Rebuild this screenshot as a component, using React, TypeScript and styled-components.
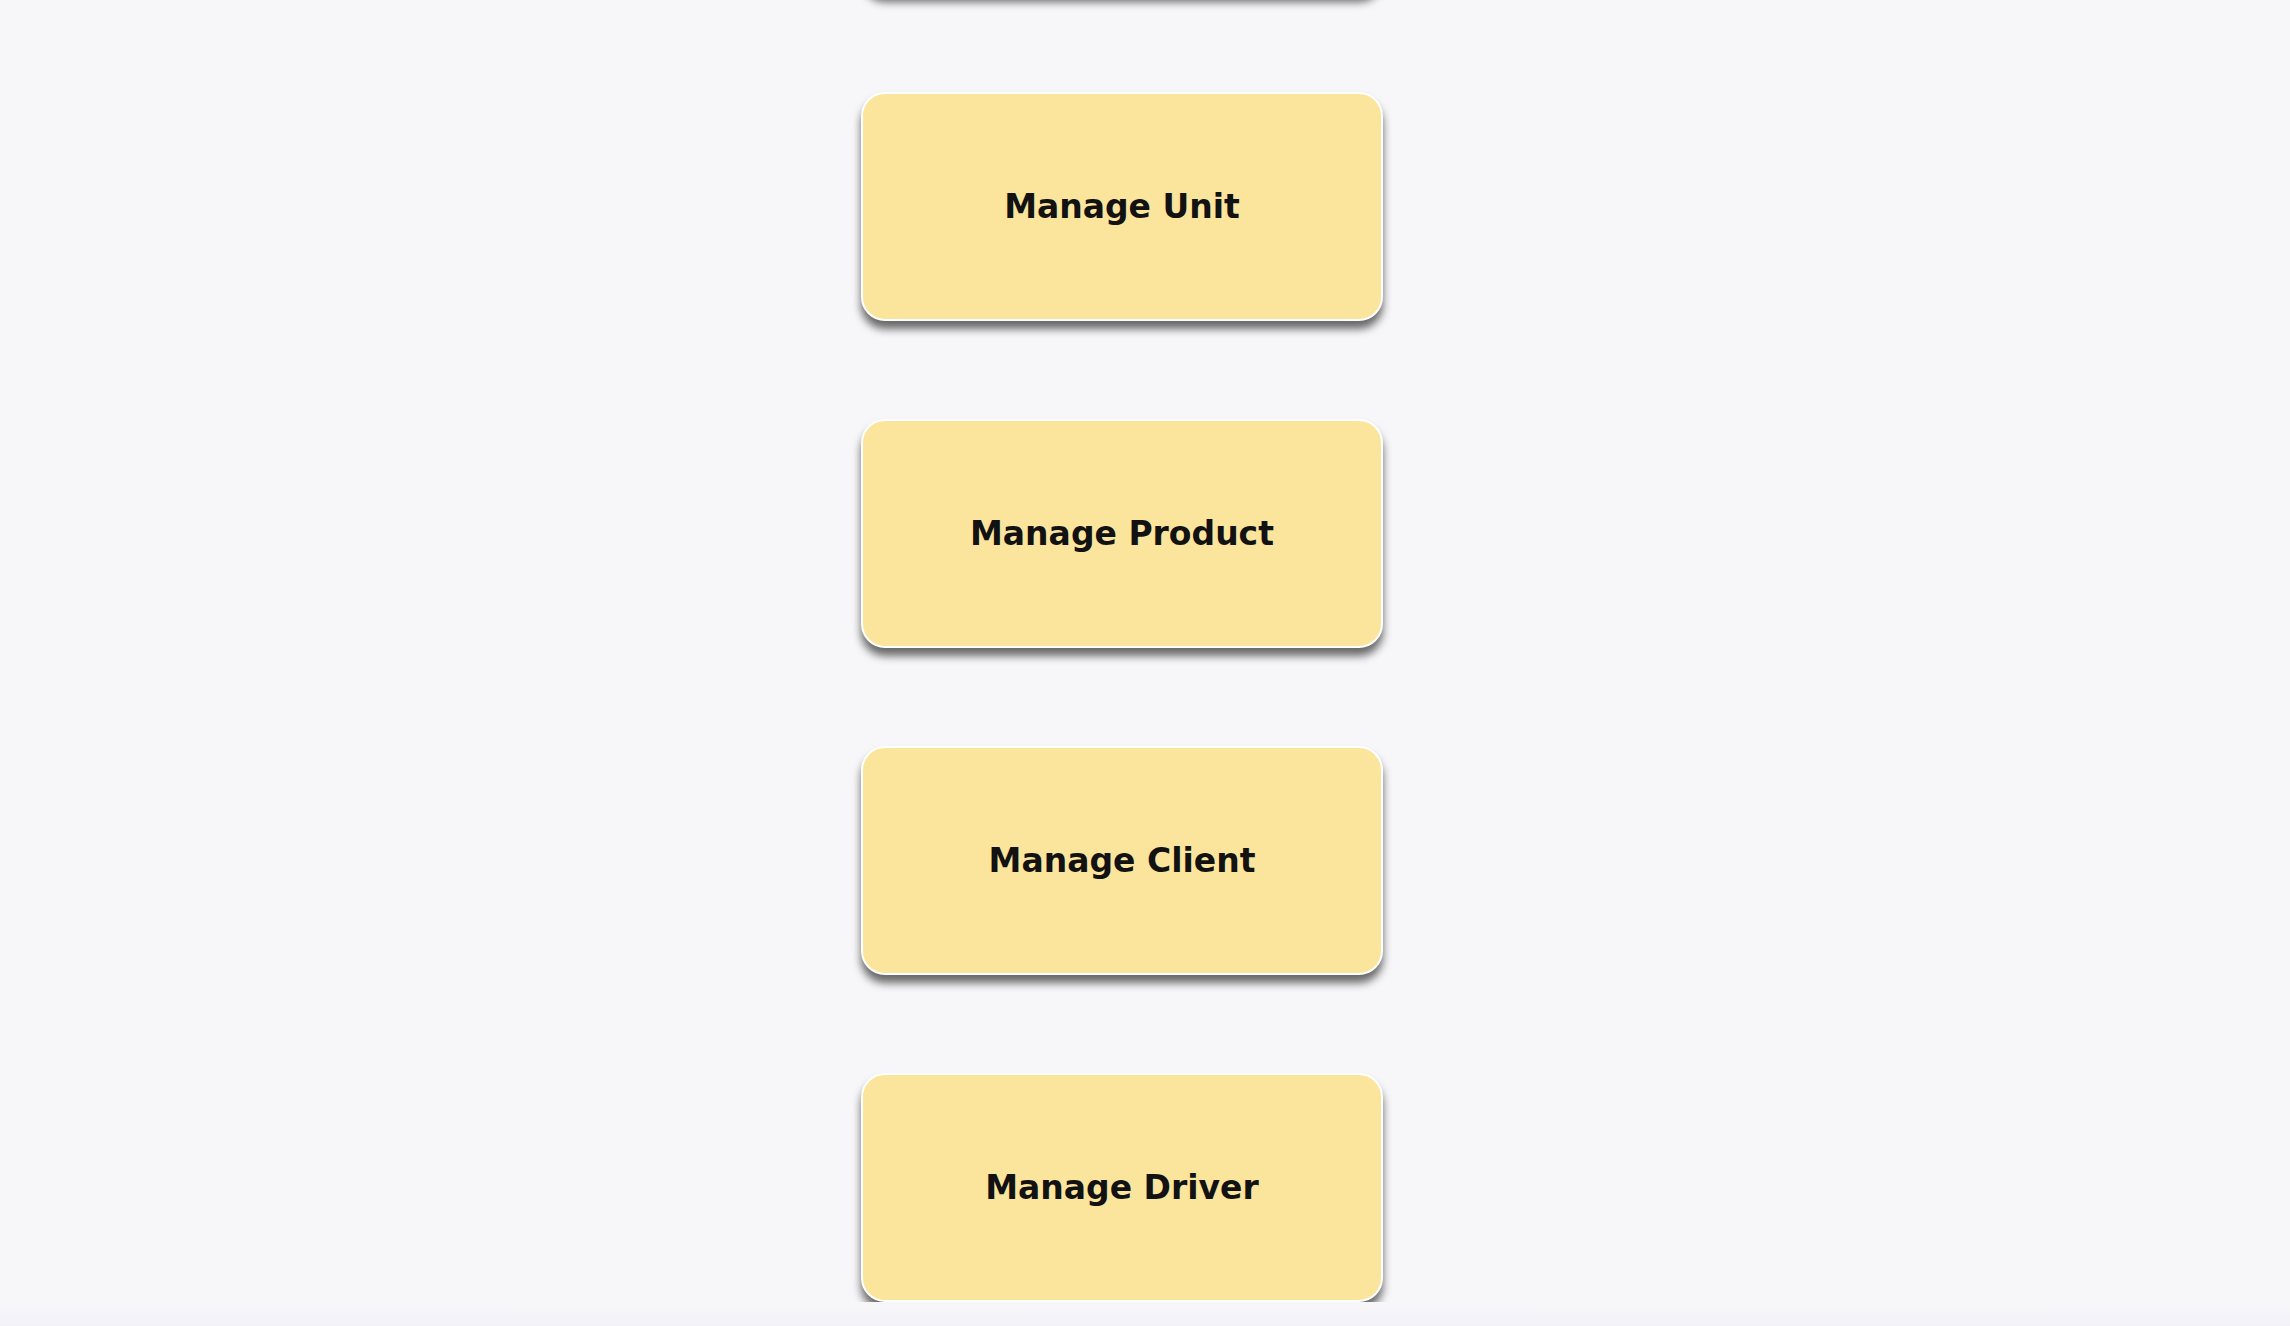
import React from "react";
import styled, { createGlobalStyle } from "styled-components";

const GlobalStyle = createGlobalStyle`
  html, body {
    margin: 0;
    padding: 0;
    background: #f7f7f9;
    overflow: hidden;
  }
  body {
    font-family: "DejaVu Sans", "Liberation Sans", sans-serif;
  }
`;

const Page = styled.main`
  min-height: 1326px;
  display: flex;
  flex-direction: column;
  align-items: center;
  gap: 98px;
  margin-top: -235px;
  padding-right: 46px;
`;

const Card = styled.button`
  width: 522px;
  height: 229px;
  box-sizing: border-box;
  display: flex;
  align-items: center;
  justify-content: center;
  background: #fbe59d;
  border: 2px solid #ffffff;
  border-radius: 24px;
  box-shadow: 0 8px 9px rgba(0, 0, 0, 0.58);
  font-family: "DejaVu Sans", "Liberation Sans", sans-serif;
  font-weight: 700;
  font-size: 33px;
  color: #121212;
  cursor: pointer;
  padding: 0;
`;

const BottomFade = styled.div`
  position: fixed;
  left: 0;
  right: 0;
  bottom: 0;
  height: 22px;
  background: linear-gradient(to bottom, rgba(242, 241, 247, 0), rgba(242, 241, 247, 1));
  pointer-events: none;
`;

const items = ["", "Manage Unit", "Manage Product", "Manage Client", "Manage Driver"];

export default function App() {
  return (
    <>
      <GlobalStyle />
      <Page>
        {items.map((label, i) => (
          <Card key={i}>{label}</Card>
        ))}
      </Page>
      <BottomFade />
    </>
  );
}
